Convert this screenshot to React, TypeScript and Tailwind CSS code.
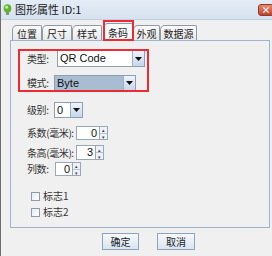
import React from "react";

const font = { fontFamily: '"Noto Sans CJK SC", "Liberation Sans", sans-serif' };

function Arrow() {
  return (
    <svg width="7" height="4" viewBox="0 0 7 4">
      <path d="M0 0h7L3.5 4z" fill="#111" />
    </svg>
  );
}

function Combo({ w, h, text, sel }: { w: number; h: number; text: string; sel?: boolean }) {
  return (
    <div
      className={`flex shrink-0 border border-[#8f9fb3] ${sel ? "bg-[#a9bcd2]" : "bg-white"}`}
      style={{ width: w, height: h }}
    >
      <div className="flex flex-1 items-center pl-[2px] text-[11px] leading-none text-[#111]" style={{ fontFamily: '"Liberation Sans", sans-serif' }}>
        {text}
      </div>
      <div className="flex w-[12px] items-center justify-center border-l border-[#9fb2c8] bg-gradient-to-b from-[#eef4fb] to-[#c6d7ea]">
        <Arrow />
      </div>
    </div>
  );
}

function Spin({ w, h, v }: { w: number; h: number; v: string }) {
  return (
    <div className="flex shrink-0" style={{ height: h }}>
      <div
        className="flex items-center justify-end border border-[#9aa7b6] bg-white pr-[2px] text-[11px] leading-none text-[#111]"
        style={{ width: w, fontFamily: '"Liberation Sans", sans-serif' }}
      >
        {v}
      </div>
      <div className="flex w-[8px] flex-col border border-l-0 border-[#9aa7b6]">
        <div className="flex flex-1 items-center justify-center border-b border-[#b5c2d0] bg-[#eef2f7] text-[5px] leading-none text-[#444]">▴</div>
        <div className="flex flex-1 items-center justify-center bg-[#eef2f7] text-[5px] leading-none text-[#444]">▾</div>
      </div>
    </div>
  );
}

function Tab({ label, w, active }: { label: string; w: number; active?: boolean }) {
  return (
    <div
      className={`flex items-center justify-center whitespace-nowrap rounded-tl-[5px] rounded-tr-[2px] border border-b-0 border-[#8e9aa8] pt-[1px] text-[10px] leading-none text-[#222] ${
        active ? "h-[17px] bg-[#f7f9fc]" : "h-[15px] bg-gradient-to-b from-[#fbfbfb] to-[#e8e8e8]"
      }`}
      style={{ width: w }}
    >
      {label}
    </div>
  );
}

function Check({ label }: { label: string }) {
  return (
    <div className="flex items-center gap-[3px] whitespace-nowrap text-[10px] leading-none text-[#333]">
      <div className="h-[9px] w-[9px] border border-[#8a9bb0] bg-gradient-to-br from-[#e4ebf3] to-white" />
      {label}
    </div>
  );
}

function Label({ w, children }: { w: number; children: React.ReactNode }) {
  return (
    <span className="shrink-0 whitespace-nowrap text-[10px] leading-none tracking-[-0.4px] text-[#333]" style={{ width: w }}>
      {children}
    </span>
  );
}

export default function App() {
  return (
    <div className="relative h-[256px] w-[272px] overflow-hidden border-l border-[#6e6e6e] bg-[#f0f0f0]" style={font}>
      <div className="flex h-[20px] items-center border-b border-[#c4d0de] bg-gradient-to-b from-[#e4ecf6] to-[#d6e2f0] pl-[2px]">
        <svg width="9" height="11" viewBox="0 0 9 11">
          <ellipse cx="4.5" cy="4.5" rx="3.8" ry="4.2" fill="#5fb32e" />
          <ellipse cx="3.6" cy="3.2" rx="1.5" ry="1.6" fill="#c9f29c" />
          <rect x="3" y="8.3" width="3" height="2.5" fill="#7c8a6a" />
        </svg>
        <span className="ml-[3px] text-[11px] leading-none text-[#1a1a1a]">图形属性 ID:1</span>
        <div className="ml-auto mr-[-2px] flex h-[12px] w-[16px] items-center justify-center rounded-[3px] border border-[#8a3a2c] bg-gradient-to-b from-[#e98a74] to-[#c3402a] text-[9px] font-bold leading-none text-white">
          ×
        </div>
      </div>

      <div className="mt-[3px] flex items-end pl-[11px]">
        <Tab label="位置" w={30} />
        <Tab label="尺寸" w={30} />
        <Tab label="样式" w={30} />
        <div className="ml-[1px]" />
        <Tab label="条码" w={30} active />
        <Tab label="外观" w={27} />
        <Tab label="数据源" w={37} />
      </div>

      <div className="ml-[9px] mr-[2px] flex h-[188px] flex-col border border-[#9cb4cf] bg-[#f0f0f0] pl-[16px]">
        <div className="mt-[9px] flex items-center">
          <Label w={30}>类型:</Label>
          <Combo w={88} h={17} text="QR Code" />
        </div>
        <div className="mt-[8px] flex items-center">
          <Label w={27}>模式:</Label>
          <Combo w={82} h={16} text="Byte" sel />
        </div>
        <div className="mt-[11px] flex items-center">
          <Label w={27}>级别:</Label>
          <Combo w={29} h={16} text="0" />
        </div>
        <div className="mt-[8px] flex items-center">
          <Label w={49}>系数(毫米):</Label>
          <Spin w={24} h={14} v="0" />
        </div>
        <div className="mt-[5px] flex items-center">
          <Label w={49}>条高(毫米):</Label>
          <Spin w={20} h={15} v="3" />
        </div>
        <div className="mt-[2px] flex items-center">
          <Label w={28}>列数:</Label>
          <Spin w={18} h={14} v="0" />
        </div>
        <div className="mt-[14px] flex h-[12px] items-center pl-[4px]">
          <Check label="标志1" />
        </div>
        <div className="mt-[4px] flex h-[12px] items-center pl-[4px]">
          <Check label="标志2" />
        </div>
      </div>

      <div className="mt-[5px] flex pl-[101px]">
        <button className="flex h-[17px] w-[37px] items-center justify-center border border-[#8ea2ba] bg-gradient-to-b from-[#f6f9fc] to-[#d9e4f0] text-[10px] leading-none text-[#222]">
          确定
        </button>
        <button className="ml-[18px] flex h-[17px] w-[38px] items-center justify-center border border-[#8ea2ba] bg-gradient-to-b from-[#f6f9fc] to-[#d9e4f0] text-[10px] leading-none text-[#222]">
          取消
        </button>
      </div>

      <div className="pointer-events-none absolute left-[102px] top-[20px] h-[21px] w-[31px] border-2 border-[#ee2a33]" />
      <div className="pointer-events-none absolute left-[17px] top-[49px] h-[43px] w-[131px] border-2 border-[#ee2a33]" />
    </div>
  );
}
